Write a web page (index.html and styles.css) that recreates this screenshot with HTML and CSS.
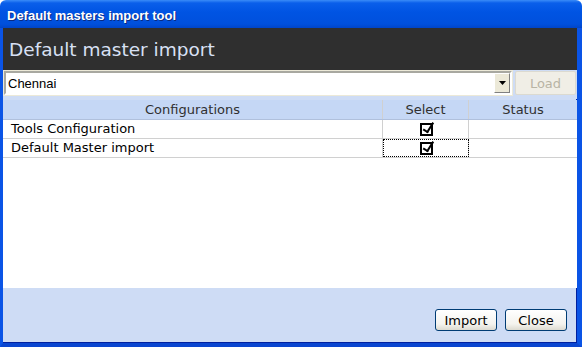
FILE: index.html
```html
<!DOCTYPE html>
<html lang="en">
<head>
    <meta charset="UTF-8">
    <title>Default masters import tool</title>
    <link rel="stylesheet" href="styles.css">
</head>
<body>
    <div class="window">
        <div class="titlebar">Default masters import tool</div>

        <div class="frame">
            <div class="header">Default master import</div>

            <div class="combo-row">
                <div class="combo">
                    <span class="combo-text">Chennai</span>
                    <span class="combo-btn">
                        <svg width="7" height="4" viewBox="0 0 7 4"><path d="M0 0h7L3.5 4z" fill="#000"/></svg>
                    </span>
                </div>
                <button class="btn btn-load" disabled>Load</button>
            </div>

            <div class="grid">
                <div class="grid-head">
                    <div class="col col-name">Configurations</div>
                    <div class="col col-select">Select</div>
                    <div class="col col-status">Status</div>
                </div>
                <div class="grid-row">
                    <div class="col col-name">Tools Configuration</div>
                    <div class="col col-select"><span class="check"></span></div>
                    <div class="col col-status"></div>
                </div>
                <div class="grid-row">
                    <div class="col col-name">Default Master import</div>
                    <div class="col col-select focused"><span class="check"></span></div>
                    <div class="col col-status"></div>
                </div>
            </div>

            <div class="footer">
                <button class="btn">Import</button>
                <button class="btn">Close</button>
            </div>
        </div>
    </div>
</body>
</html>
```

FILE: styles.css
```css
* {
    margin: 0;
    padding: 0;
    box-sizing: border-box;
}

body {
    width: 582px;
    height: 347px;
    overflow: hidden;
    font-family: "DejaVu Sans", Verdana, sans-serif;
    font-size: 13px;
    color: #000;
    background: #fff;
}

.window {
    width: 582px;
    height: 347px;
    display: flex;
    flex-direction: column;
}

.titlebar {
    height: 28px;
    padding: 0 7px;
    line-height: 31px;
    color: #fff;
    font-family: "Liberation Sans", Arial, sans-serif;
    font-weight: bold;
    font-size: 13px;
    background: linear-gradient(#3a8cf8 0, #0a5fea 3px, #0054e3 12px, #0050dc 24px, #0045c8 28px);
    border-radius: 6px 6px 0 0;
    text-shadow: 1px 1px 0 #0a2a80;
}

.frame {
    flex: 1;
    display: flex;
    flex-direction: column;
    border-left: 3px solid #0a54e6;
    border-right: 5px solid #0a54e6;
    border-bottom: 4px solid #0a46d0;
    box-shadow: inset -1px -1px 0 #0020a0;
    background: #cedcf5;
}

.header {
    height: 42px;
    padding: 0 6px;
    line-height: 43px;
    background: #2f2f2f;
    color: #d8e0f4;
    font-size: 18.5px;
}

.combo-row {
    display: flex;
    gap: 3px;
    padding: 1px 1px 4px 1px;
    background: #cedcf5;
}

.combo {
    flex: 1;
    height: 24px;
    display: flex;
    align-items: center;
    background: #fff;
    border: 2px solid;
    border-color: #a8a8a0 #fff #fff #a8a8a0;
    outline: 1px solid #ece9d8;
}

.combo-text {
    flex: 1;
    padding-left: 2px;
    font-family: "Liberation Sans", Arial, sans-serif;
    font-size: 13px;
}

.combo-btn {
    width: 16px;
    height: 20px;
    display: flex;
    align-items: center;
    justify-content: center;
    background: #ece9d8;
    border: 1px solid;
    border-color: #fff #808080 #808080 #fff;
}

.btn {
    height: 22px;
    width: 62px;
    font-family: "DejaVu Sans", Verdana, sans-serif;
    font-size: 13px;
    color: #000;
    background: linear-gradient(#fff, #f4f3ee 70%, #dcdad0);
    border: 1px solid #003c74;
    border-radius: 3px;
}

.btn-load {
    height: 24px;
    width: 61px;
    color: #b8b4a4;
    background: #f0eee6;
    border: 1px solid #dcdad0;
    border-radius: 2px;
}

.grid {
    flex: 1;
    margin-top: 1px;
    background: #fff;
    display: flex;
    flex-direction: column;
}

.grid-head,
.grid-row {
    display: flex;
    height: 20px;
    border-bottom: 1px solid #d0d0d0;
}

.grid-row {
    height: 19px;
}

.grid-head {
    background: #c5d7f5;
    color: #303030;
    border-bottom: 1px solid #b0c0dc;
}

.col {
    display: flex;
    align-items: center;
    line-height: 18px;
}

.col-name {
    width: 380px;
    padding-left: 8px;
    border-right: 1px solid #d0d0d0;
}

.grid-head .col {
    justify-content: center;
    padding-left: 0;
}

.col-select {
    width: 86px;
    justify-content: center;
    border-right: 1px solid #d0d0d0;
}

.col-status {
    flex: 1;
}

.focused {
    outline: 1px dotted #000;
    outline-offset: -1px;
}

.check {
    position: relative;
    width: 13px;
    height: 13px;
    margin-left: 2px;
    border: 2px solid #000;
    background: #fff;
}

.check::after {
    content: "";
    position: absolute;
    left: 2px;
    top: -4px;
    width: 4px;
    height: 10px;
    border: solid #000;
    border-width: 0 2px 2px 0;
    transform: rotate(32deg) translate(1px, -1px);
}

.footer {
    height: 55px;
    display: flex;
    justify-content: flex-end;
    align-items: flex-end;
    gap: 8px;
    padding: 0 10px 12px 0;
}
```
